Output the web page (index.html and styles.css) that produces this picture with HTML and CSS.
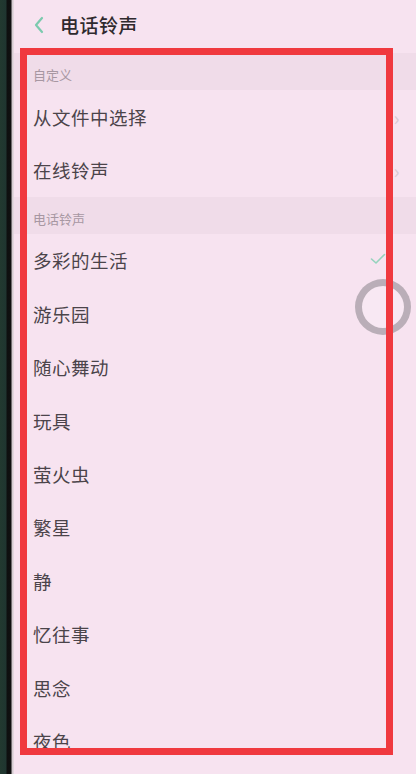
FILE: index.html
```html
<!DOCTYPE html>
<html>
<head>
<meta charset="utf-8">
<link rel="stylesheet" href="styles.css">
</head>
<body>
<div id="phone">
  <div id="edge"></div>
  <div id="screen">
    <div class="topbar">
      <svg class="back" width="12" height="18" viewBox="0 0 12 18"><path d="M9 2 L3 9 L9 16" fill="none" stroke="#7ccaae" stroke-width="2.2" stroke-linecap="round" stroke-linejoin="round"/></svg>
      <span class="title">电话铃声</span>
    </div>

    <div class="section">自定义</div>
    <div class="row">从文件中选择<span class="more">›</span></div>
    <div class="row">在线铃声<span class="more">›</span></div>

    <div class="section">电话铃声</div>
    <div class="row">多彩的生活
      <svg class="check" width="16" height="12" viewBox="0 0 16 12"><path d="M1.5 6 L6 10 L14.5 1.5" fill="none" stroke="#95d3bd" stroke-width="1.6" stroke-linecap="round" stroke-linejoin="round"/></svg>
    </div>
    <div class="row">游乐园</div>
    <div class="row">随心舞动</div>
    <div class="row">玩具</div>
    <div class="row">萤火虫</div>
    <div class="row">繁星</div>
    <div class="row">静</div>
    <div class="row">忆往事</div>
    <div class="row">思念</div>
    <div class="row">夜色</div>
  </div>

  <div id="touch"></div>
  <div id="frame"></div>
</div>
</body>
</html>
```

FILE: styles.css
```css
html, body{
	margin: 0;
	padding: 0;
	height: 774px;
	overflow: hidden;
	background: #f7e4f0;
}

#phone{
	position: relative;
	display: flex;
	height: 774px;
	font-family: "Noto Sans CJK SC", "Noto Sans", sans-serif;
}

#edge{
	width: 14px;
	flex-shrink: 0;
	background: linear-gradient(to right, #22392f 0, #1f3530 6px, #0e0f0f 7px, #101010 11px, #cfc6cb 12px, #eadde5 14px);
}

#screen{
	flex: 1;
	background: #f7e3f0;
}

.topbar{
	height: 53px;
	display: flex;
	align-items: center;
	padding-left: 19px;
	padding-bottom: 4px;
	box-sizing: border-box;
}

.back{
	margin-right: 15px;
}

.title{
	font-size: 19px;
	font-weight: 500;
	color: #2f2a2e;
	letter-spacing: 0.5px;
}

.section{
	height: 37px;
	display: flex;
	align-items: flex-end;
	padding: 0 0 6px 19px;
	box-sizing: border-box;
	background: #f0dce9;
	font-size: 13px;
	color: #a797a2;
}

.row{
	height: 53.4px;
	display: flex;
	align-items: center;
	padding-left: 19px;
	position: relative;
	font-size: 18.5px;
	color: #4b444a;
	letter-spacing: 0.5px;
}

.more{
	position: absolute;
	right: 16px;
	top: 13px;
	font-size: 20px;
	color: #d9cad4;
}

.check{
	position: absolute;
	right: 30px;
	top: 19px;
}

#touch{
	position: absolute;
	left: 355px;
	top: 279px;
	width: 42px;
	height: 42px;
	border: 7px solid rgba(160, 150, 158, 0.7);
	border-radius: 50%;
	background: rgba(255, 255, 255, 0.2);
}

#frame{
	position: absolute;
	left: 20px;
	top: 48px;
	width: 359px;
	height: 693px;
	border: 7px solid #f0393f;
}
```
